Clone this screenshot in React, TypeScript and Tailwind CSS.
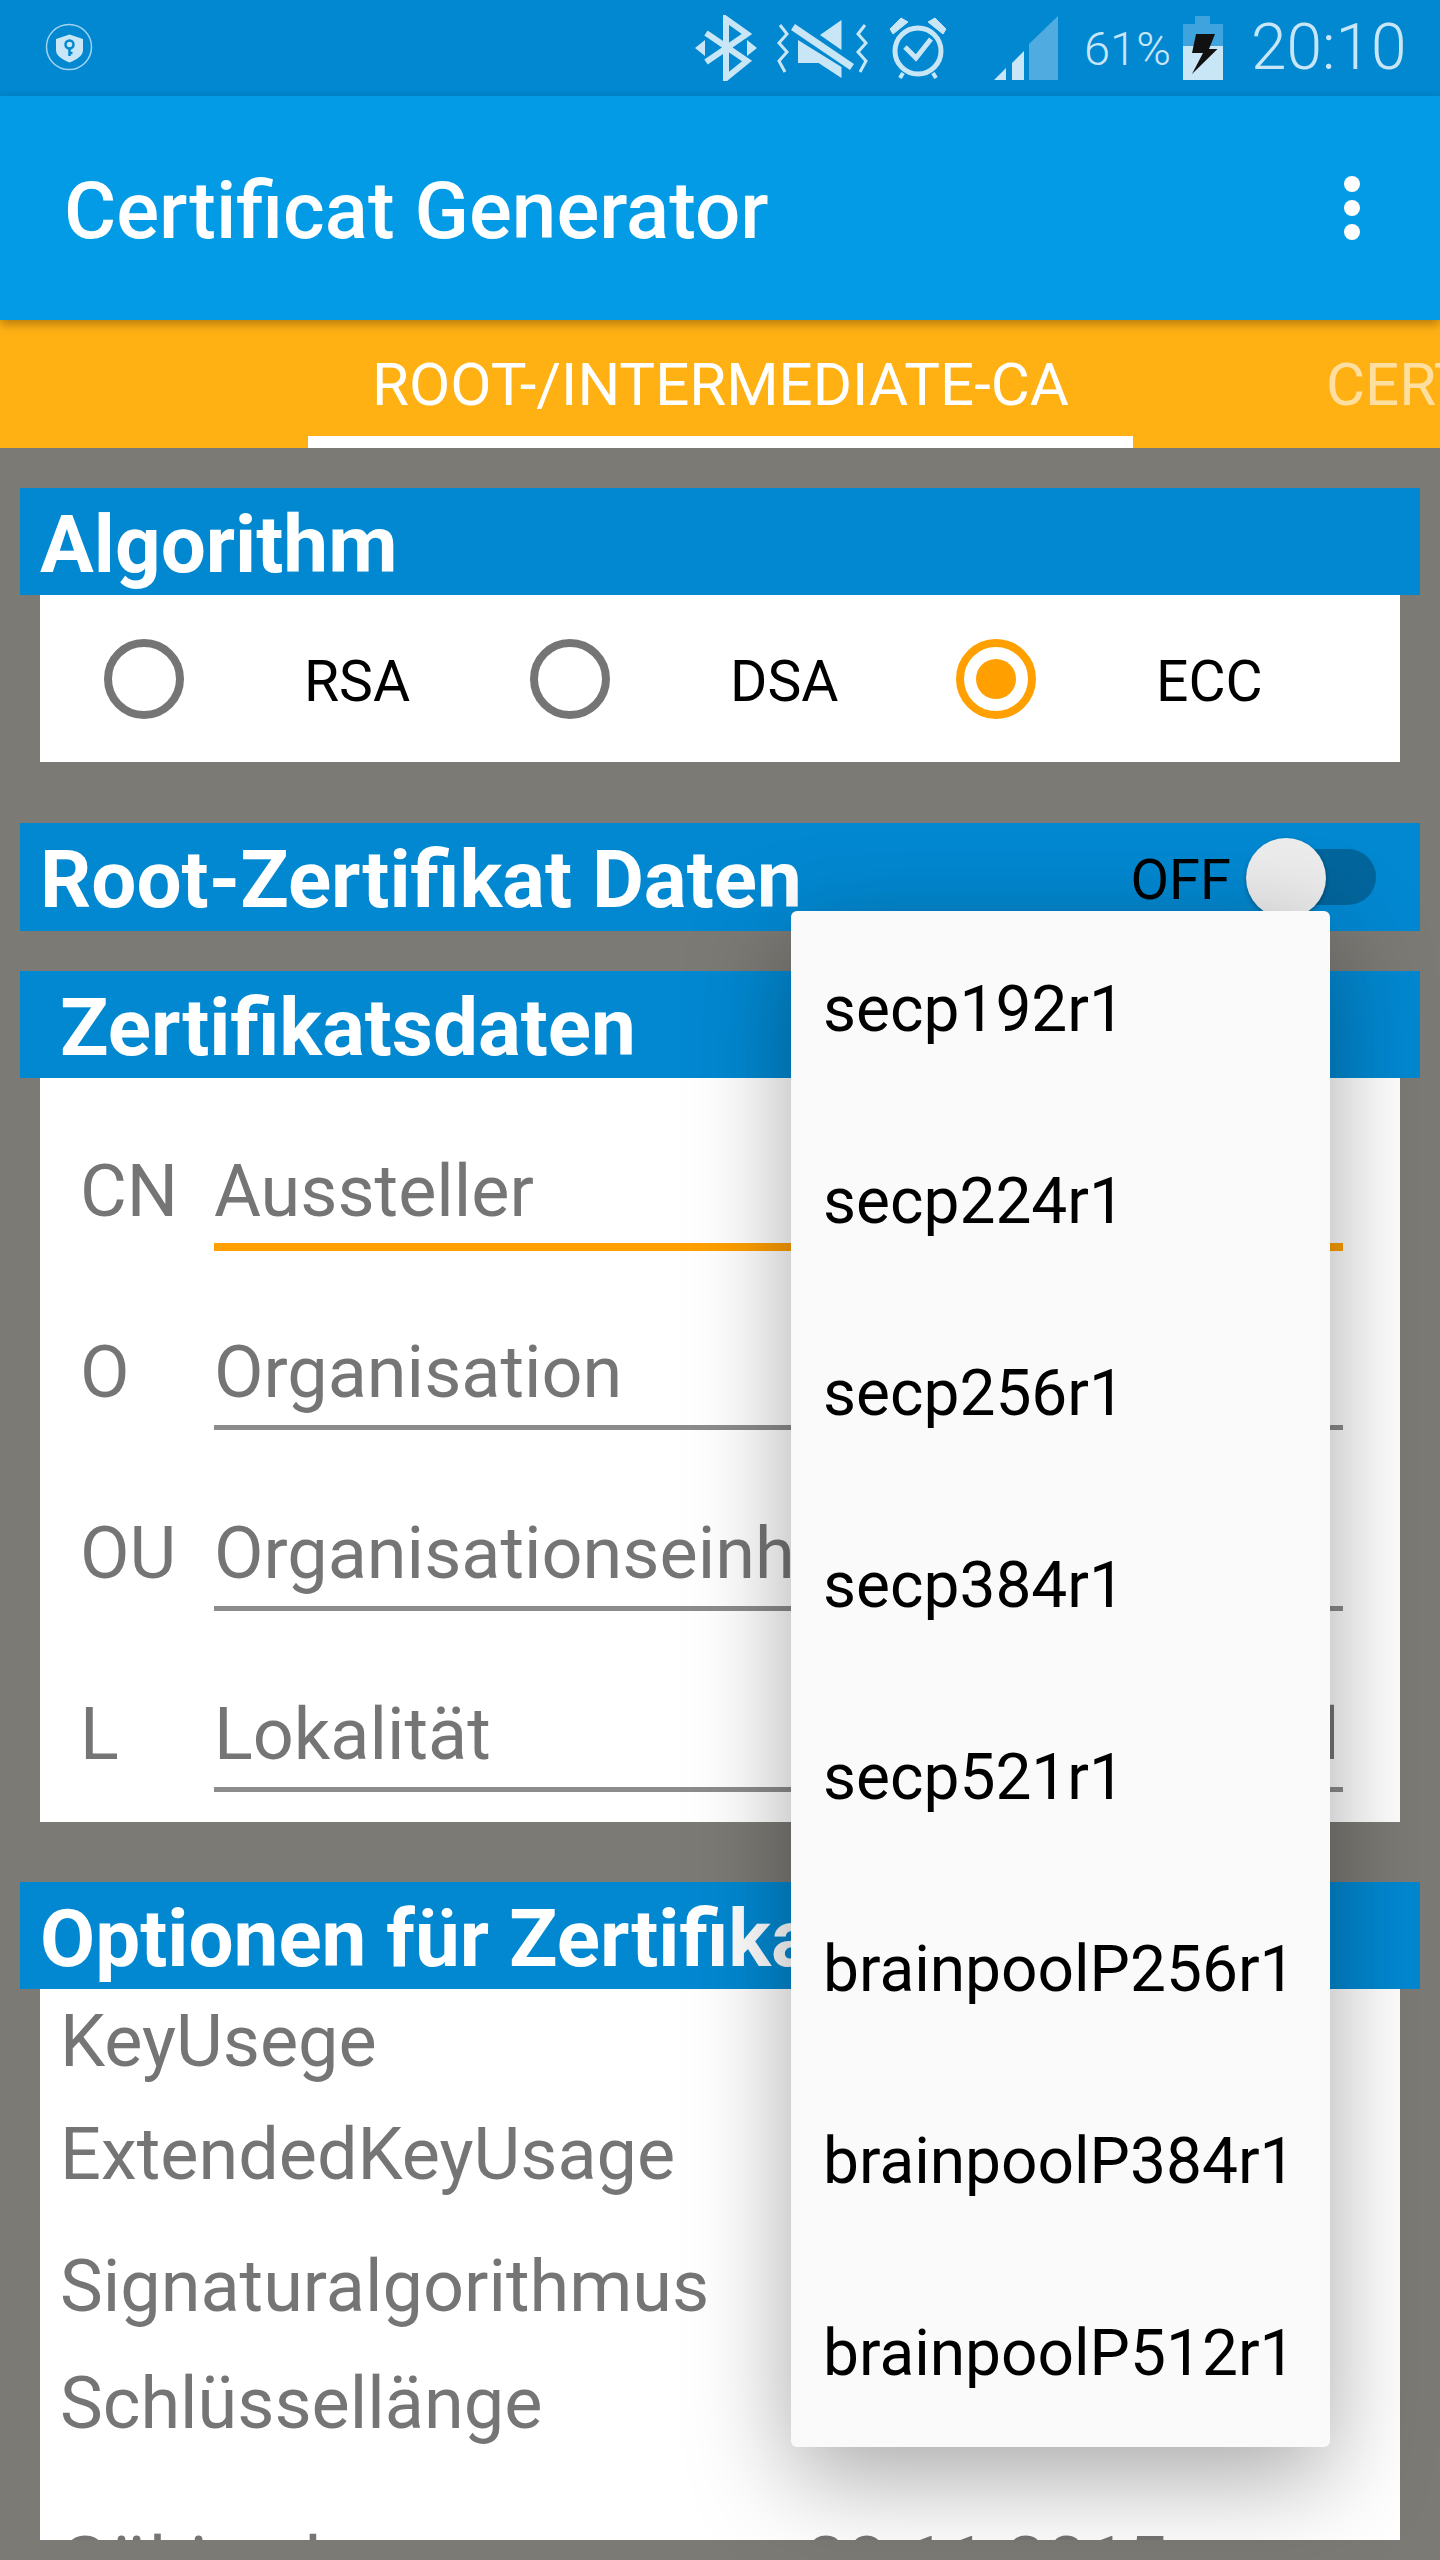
import React from 'react';

const OPTIONS = ['secp192r1', 'secp224r1', 'secp256r1', 'secp384r1', 'secp521r1', 'brainpoolP256r1', 'brainpoolP384r1', 'brainpoolP512r1'];

const ICON = '#c9e6f6';

const ShieldIcon = () => (
  <svg width="50" height="50" viewBox="0 0 50 50" fill="none" className="shrink-0 mb-[3px]">
    <circle cx="25" cy="25" r="22.5" stroke={ICON} strokeWidth="1.5" opacity="0.8" />
    <path d="M25.5 12.5 L39 17 V28 C39 34 32 38 25.5 40.5 C19 38 12 34 12 28 V17 Z" fill={ICON} />
    <circle cx="25.5" cy="22.5" r="4" stroke="#0288d1" strokeWidth="2.5" />
    <path d="M25.5 26 V34 M25.5 31 H28.5" stroke="#0288d1" strokeWidth="2.5" />
  </svg>
);

const BluetoothIcon = () => (
  <svg width="62" height="66" viewBox="0 0 62 66" fill="none" className="shrink-0">
    <path d="M11 18 L52 46 L31 63 V4 L52 19 L11 47" stroke={ICON} strokeWidth="6" />
    <path d="M0 33 L10 25 V41 Z M62 33 L52 25 V41 Z" fill={ICON} />
  </svg>
);

const MuteIcon = () => (
  <svg width="91" height="60" viewBox="0 0 91 60" fill="none" className="shrink-0">
    <path d="M64.5 0 L43 15 L64.5 30 Z M21 20 V43 H41.6 L64.5 58 V47 Z" fill={ICON} />
    <path d="M16 7 L75 47" stroke={ICON} strokeWidth="7" />
    <path d="M3 5 L10 14 L2 23 L10 32 L2 41 L8 52 M88 5 L81 14 L89 23 L81 32 L89 41 L83 52" stroke={ICON} strokeWidth="3" />
  </svg>
);

const AlarmIcon = () => (
  <svg width="60" height="62" viewBox="0 0 60 62" fill="none" className="shrink-0">
    <circle cx="29" cy="34" r="23" stroke={ICON} strokeWidth="5" />
    <path d="M1 12 L12 1 L19 5 L4 17 Z M57 12 L46 1 L39 5 L54 17 Z" fill={ICON} stroke={ICON} strokeLinejoin="round" />
    <path d="M16 30 L27 41 L42 22" stroke={ICON} strokeWidth="5" />
    <path d="M14 56 L11 61 M44 56 L47 61" stroke={ICON} strokeWidth="4" />
  </svg>
);

const SignalIcon = () => (
  <svg width="64" height="64" viewBox="0 0 64 64" className="shrink-0">
    <path d="M64 0 V64 H35 V28 Z" fill="#4fabe0" />
    <path d="M30 35 V64 H18 V47 Z M12 52 V64 H0 Z" fill={ICON} />
  </svg>
);

const BatteryIcon = () => (
  <svg width="40" height="64" viewBox="0 0 40 64" className="shrink-0">
    <rect x="12" y="0" width="15" height="8" fill="#3fa3de" />
    <rect x="0" y="8" width="40" height="22" fill="#3fa3de" />
    <rect x="0" y="30" width="40" height="34" fill={ICON} />
    <path d="M13 18 H32 L26 33 H34.5 L9 58 L20 37 H9 Z" fill="#111" />
  </svg>
);

const Header = ({ children, right, indent, h = 'h-[107px]' }: { children: React.ReactNode; right?: React.ReactNode; indent?: boolean; h?: string }) => (
  <div className={`relative ${h} mx-[20px] bg-[#0288d1] flex items-center pt-[6px] ${indent ? 'pl-[40px]' : 'pl-[20px]'} text-white font-bold text-[80px] leading-none whitespace-nowrap overflow-hidden`}>
    {children}
    {right}
  </div>
);

const Radio = ({ label, on }: { label: string; on?: boolean }) => (
  <div className="flex items-center w-[426px]">
    <div className={`w-[80px] h-[80px] rounded-full border-[8px] flex items-center justify-center ${on ? 'border-[#ffa000]' : 'border-[#757575]'}`}>
      {on && <div className="w-[40px] h-[40px] rounded-full bg-[#ffa000]" />}
    </div>
    <span className="ml-[120px] pt-[6px] text-[57px] leading-none text-black">{label}</span>
  </div>
);

const Field = ({ label, hint, active, right }: { label: string; hint: string; active?: boolean; right?: string }) => (
  <div className="flex h-[181px] pl-[40px] pr-[57px] items-start">
    <div className="w-[134px] text-[72px] leading-[96px] text-[#757575] mt-[65px]">{label}</div>
    <div className={`relative flex-1 pt-[65px] overflow-hidden ${active ? 'h-[172px] border-b-[8px] border-[#ffa000]' : 'h-[170px] border-b-[5px] border-[#8c8c8c]'}`}>
      <div className="text-[72px] leading-[96px] text-[#757575] whitespace-nowrap">{hint}</div>
      {right && <div className="absolute right-[4px] top-[65px] text-[72px] leading-[96px] text-[#757575]">{right}</div>}
    </div>
  </div>
);

const OptionRow = ({ children, h }: { children: React.ReactNode; h: string }) => (
  <div className={`${h} pl-[20px] text-[72px] leading-[96px] text-[#757575] whitespace-nowrap`}>{children}</div>
);

export default function App() {
  return (
    <div className="relative w-[1440px] h-[2560px] bg-[#7c7a75] overflow-hidden font-['Roboto',sans-serif]">
      <div className="h-[96px] bg-[#0288d1] flex items-center pl-[44px] pr-[37px]">
        <ShieldIcon />
        <div className="flex-1" />
        <div className="flex items-center">
          <BluetoothIcon />
          <div className="ml-[20px] mt-[4px] flex"><MuteIcon /></div>
          <div className="ml-[21px] flex"><AlarmIcon /></div>
          <div className="ml-[45px] flex"><SignalIcon /></div>
          <span className="ml-[26px] w-[86px] text-[47px] leading-none text-[#c9e6f6] font-light whitespace-nowrap">61%</span>
          <div className="ml-[13px] flex"><BatteryIcon /></div>
          <span className="ml-[28px] w-[152px] text-[64px] leading-none text-[#c9e6f6] font-light">20:10</span>
        </div>
      </div>

      <div className="relative z-10 h-[224px] bg-[#039be5] flex items-center justify-between pl-[64px] pr-[80px] shadow-[0_4px_10px_rgba(0,0,0,0.3)]">
        <span className="pt-[6px] text-[80px] leading-none font-medium text-white">Certificat Generator</span>
        <svg width="16" height="64" viewBox="0 0 16 64" className="shrink-0">
          <circle cx="8" cy="8" r="8" fill="white" />
          <circle cx="8" cy="32" r="8" fill="white" />
          <circle cx="8" cy="56" r="8" fill="white" />
        </svg>
      </div>

      <div className="h-[128px] bg-[#ffb013] flex overflow-hidden">
        <div className="ml-[308px] w-[825px] shrink-0 h-[128px] border-b-[12px] border-white flex items-center justify-center pt-[14px] text-[60px] leading-none text-white whitespace-nowrap">
          ROOT-/INTERMEDIATE-CA
        </div>
        <div className="ml-[193px] h-[116px] flex items-center pt-[14px] text-[60px] leading-none text-white/60 whitespace-nowrap">CERTIFIKAT</div>
      </div>

      <div className="pt-[40px]">
        <Header>Algorithm</Header>
        <div className="h-[167px] mx-[40px] bg-white flex items-center pl-[64px]">
          <Radio label="RSA" />
          <Radio label="DSA" />
          <Radio label="ECC" on />
        </div>

        <div className="mt-[61px]">
          <Header
            h="h-[108px]"
            right={
              <div className="absolute right-[44px] top-0 h-full flex items-center">
                <span className="pt-[6px] text-[56px] leading-none text-black font-normal mr-[15px]">OFF</span>
                <div className="relative w-[130px] h-[56px] rounded-full bg-[#02659c]">
                  <div className="absolute left-0 top-[-11px] w-[80px] h-[80px] rounded-full bg-[#ececec] shadow-[0_2px_4px_rgba(0,0,0,0.3)]" />
                </div>
              </div>
            }
          >
            Root-Zertifikat Daten
          </Header>
        </div>

        <div className="mt-[40px]">
          <Header indent>Zertifikatsdaten</Header>
          <div className="h-[744px] mx-[40px] bg-white pt-[1px]">
            <Field label="CN" hint="Aussteller" active />
            <Field label="O" hint="Organisation" />
            <Field label="OU" hint="Organisationseinheit" />
            <Field label="L" hint="Lokalität" right="Land" />
          </div>
        </div>

        <div className="mt-[60px]">
          <Header>Optionen für Zertifikat</Header>
          <div className="h-[551px] mx-[40px] bg-white overflow-hidden pt-[5px]">
            <OptionRow h="h-[113px]">KeyUsege</OptionRow>
            <OptionRow h="h-[132px]">ExtendedKeyUsage</OptionRow>
            <OptionRow h="h-[117px]">Signaturalgorithmus</OptionRow>
            <OptionRow h="h-[112px]">Schlüssellänge</OptionRow>
            <div className="flex mt-[48px]">
              <OptionRow h="h-[96px] w-[766px]">Gültig ab</OptionRow>
              <div className="text-[72px] leading-[96px] text-[#757575]">28.11.2015</div>
            </div>
          </div>
        </div>
      </div>

      <div className="absolute z-20 left-[791px] top-[911px] w-[539px] rounded-[6px] bg-[#fafafa] shadow-[0_30px_100px_rgba(0,0,0,0.35)]">
        {OPTIONS.map((o) => (
          <div key={o} className="h-[192px] flex items-center pl-[32px] pt-[6px] text-[64px] leading-none text-black whitespace-nowrap">{o}</div>
        ))}
      </div>
    </div>
  );
}
